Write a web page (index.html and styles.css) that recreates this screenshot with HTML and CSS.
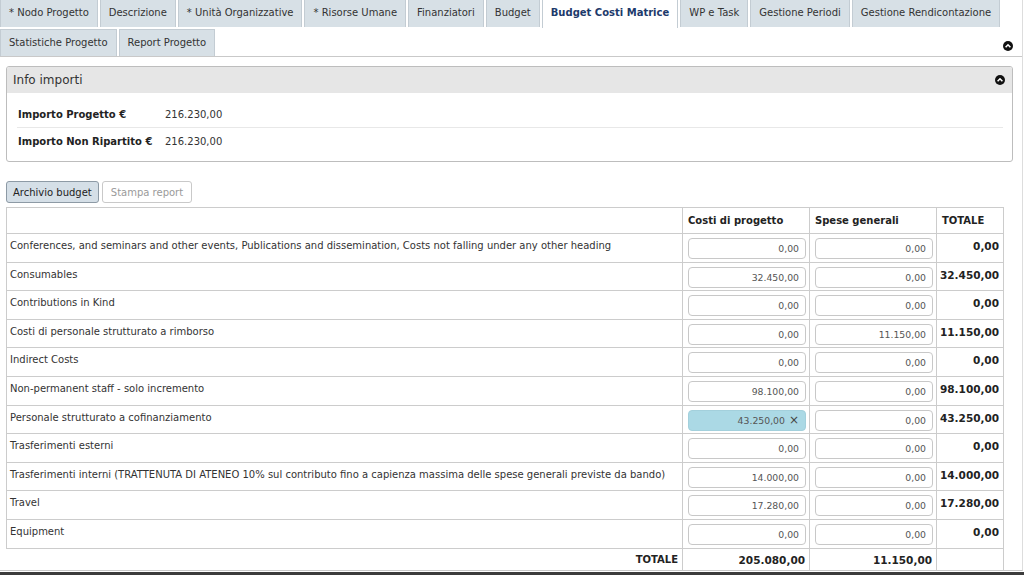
FILE: index.html
```html
<!DOCTYPE html>
<html lang="it">
<head>
<meta charset="utf-8">
<title>Budget Costi Matrice</title>
<link rel="stylesheet" href="styles.css">
</head>
<body>
<div class="page">
  <div class="tabs">
    <div class="tab-row">
      <span class="tab">* Nodo Progetto</span>
      <span class="tab">Descrizione</span>
      <span class="tab">* Unità Organizzative</span>
      <span class="tab">* Risorse Umane</span>
      <span class="tab">Finanziatori</span>
      <span class="tab">Budget</span>
      <span class="tab active">Budget Costi Matrice</span>
      <span class="tab">WP e Task</span>
      <span class="tab">Gestione Periodi</span>
      <span class="tab">Gestione Rendicontazione</span>
    </div>
    <div class="tab-row second">
      <span class="tab">Statistiche Progetto</span>
      <span class="tab">Report Progetto</span>
      <span class="spacer"></span>
      <svg class="toggle tabs-toggle" viewBox="0 0 10 10" width="10" height="10"><circle cx="5" cy="5" r="5" fill="#111"/><path d="M2.6 6.2 L5 3.8 L7.4 6.2" fill="none" stroke="#fff" stroke-width="1.6"/></svg>
    </div>
  </div>

  <div class="content">
    <section class="panel">
      <header class="panel-head">
        <span>Info importi</span>
        <svg class="toggle" viewBox="0 0 10 10" width="10" height="10"><circle cx="5" cy="5" r="5" fill="#111"/><path d="M2.6 6.2 L5 3.8 L7.4 6.2" fill="none" stroke="#fff" stroke-width="1.6"/></svg>
      </header>
      <div class="panel-body">
        <div class="info-row"><span class="info-label">Importo Progetto €</span><span>216.230,00</span></div>
        <div class="info-row"><span class="info-label">Importo Non Ripartito €</span><span>216.230,00</span></div>
      </div>
    </section>

    <div class="actions">
      <button class="btn primary">Archivio budget</button>
      <button class="btn disabled">Stampa report</button>
    </div>

    <table class="matrix">
      <thead>
        <tr><th class="c-label"></th><th class="c-num">Costi di progetto</th><th class="c-num">Spese generali</th><th class="c-tot">TOTALE</th></tr>
      </thead>
      <tbody>
        <tr><td>Conferences, and seminars and other events, Publications and dissemination, Costs not falling under any other heading</td><td><div class="inp">0,00</div></td><td><div class="inp">0,00</div></td><td class="tot">0,00</td></tr>
        <tr><td>Consumables</td><td><div class="inp">32.450,00</div></td><td><div class="inp">0,00</div></td><td class="tot">32.450,00</td></tr>
        <tr><td>Contributions in Kind</td><td><div class="inp">0,00</div></td><td><div class="inp">0,00</div></td><td class="tot">0,00</td></tr>
        <tr><td>Costi di personale strutturato a rimborso</td><td><div class="inp">0,00</div></td><td><div class="inp">11.150,00</div></td><td class="tot">11.150,00</td></tr>
        <tr><td>Indirect Costs</td><td><div class="inp">0,00</div></td><td><div class="inp">0,00</div></td><td class="tot">0,00</td></tr>
        <tr><td>Non-permanent staff - solo incremento</td><td><div class="inp">98.100,00</div></td><td><div class="inp">0,00</div></td><td class="tot">98.100,00</td></tr>
        <tr><td>Personale strutturato a cofinanziamento</td><td><div class="inp focus">43.250,00<span class="clear">×</span></div></td><td><div class="inp">0,00</div></td><td class="tot">43.250,00</td></tr>
        <tr><td>Trasferimenti esterni</td><td><div class="inp">0,00</div></td><td><div class="inp">0,00</div></td><td class="tot">0,00</td></tr>
        <tr><td>Trasferimenti interni (TRATTENUTA DI ATENEO 10% sul contributo fino a capienza massima delle spese generali previste da bando)</td><td><div class="inp">14.000,00</div></td><td><div class="inp">0,00</div></td><td class="tot">14.000,00</td></tr>
        <tr><td>Travel</td><td><div class="inp">17.280,00</div></td><td><div class="inp">0,00</div></td><td class="tot">17.280,00</td></tr>
        <tr><td>Equipment</td><td><div class="inp">0,00</div></td><td><div class="inp">0,00</div></td><td class="tot">0,00</td></tr>
      </tbody>
      <tfoot>
        <tr><td class="foot-label">TOTALE</td><td class="foot-num">205.080,00</td><td class="foot-num">11.150,00</td><td class="foot-empty"></td></tr>
      </tfoot>
    </table>
  </div>
</div>
<div class="taskbar"></div>
</body>
</html>
```

FILE: styles.css
```css
html, body {
  margin: 0;
  padding: 0;
  background: #fff;
}
body {
  font-family: "DejaVu Sans", Verdana, sans-serif;
  font-size: 10px;
  color: #333;
  height: 575px;
  display: flex;
  flex-direction: column;
  overflow: hidden;
}
.page {
  width: 1022px;
  height: 570px;
  border-right: 1px solid #ddd;
  border-bottom: 1px solid #c8c8c8;
  overflow: hidden;
}
.taskbar {
  flex: 1;
  background: #3c3c3c;
  margin-top: 1px;
}

/* tabs */
.tabs {
  border-bottom: 1px solid #c9c9c9;
}
.tab-row {
  display: flex;
  gap: 2px;
  height: 27px;
  align-items: flex-end;
}
.tab-row.second {
  margin-top: 2px;
  align-items: flex-start;
}
.tab {
  height: 27px;
  line-height: 26px;
  padding: 0 8px;
  background: #d7e0e6;
  border: 1px solid #c3ccd3;
  border-bottom: none;
  box-sizing: border-box;
  color: #333;
  white-space: nowrap;
}
.tab-row:first-child .tab {
  border-top: none;
}
.tab.active {
  background: #fff;
  color: #1d3a6b;
  font-weight: bold;
  height: 28px;
  margin-bottom: -1px;
  position: relative;
}
.spacer { flex: 1; }
.toggle { display: block; }
.tabs-toggle {
  align-self: center;
  margin: 6px 9px 0 0;
}

/* content */
.content {
  padding: 9px 9px 0 6px;
}
.panel {
  border: 1px solid #bdbdbd;
  border-radius: 3px;
  overflow: hidden;
}
.panel-head {
  height: 26px;
  background: #e6e6e6;
  display: flex;
  align-items: center;
  justify-content: space-between;
  padding: 0 7px 0 6px;
  font-size: 12px;
  color: #333;
}
.panel-body {
  padding: 8px 9px 7px 10px;
}
.info-row {
  display: flex;
  height: 26px;
  align-items: center;
}
.info-row + .info-row {
  border-top: 1px solid #e8e8e8;
}
.info-label {
  width: 147px;
  font-weight: bold;
  color: #222;
  padding-left: 1px;
}

.actions {
  display: flex;
  gap: 3px;
  margin-top: 19px;
  margin-bottom: 4px;
}
.btn {
  font-family: inherit;
  font-size: 10px;
  height: 22px;
  padding: 0 6px;
  border-radius: 3px;
  cursor: pointer;
}
.btn.primary {
  background: #d5dfe7;
  border: 1px solid #8d9aa5;
  color: #222;
}
.btn.disabled {
  background: #fff;
  border: 1px solid #c9c9c9;
  color: #9a9a9a;
  padding: 0 8px;
}

/* table */
.matrix {
  width: 998px;
  border-collapse: collapse;
  table-layout: fixed;
}
.matrix th, .matrix td {
  border: 1px solid #cccccc;
  vertical-align: top;
  text-align: left;
}
.matrix th {
  height: 25px;
  padding: 0 5px;
  vertical-align: middle;
  font-weight: bold;
  color: #222;
}
.c-label { width: 665px; }
.c-num { width: 116px; }
.c-tot { width: 56px; }
.matrix tbody td {
  height: 28.6px;
  padding: 4px 3px 0 3px;
  box-sizing: border-box;
  white-space: nowrap;
}
.matrix tbody td:first-child {
  padding: 6px 3px 0 3px;
}
.matrix tbody td.tot {
  text-align: right;
  font-weight: bold;
  font-size: 10.5px;
  color: #222;
  padding: 6px 4px 0 3px;
}
.inp {
  margin-left: 2px;
  height: 21px;
  box-sizing: border-box;
  border: 1px solid #c8c8c8;
  border-radius: 4px;
  text-align: right;
  font-size: 9.3px;
  line-height: 19px;
  padding-right: 6px;
  color: #555;
  background: #fff;
}
.inp.focus {
  background: #abd9e5;
  border-color: #a3d0dc;
}
.clear {
  font-size: 12px;
  margin-left: 4px;
  color: #444;
}
.matrix tfoot td {
  height: 22px;
  padding: 0 4px;
  text-align: right;
  font-weight: bold;
  color: #222;
  vertical-align: middle;
}
.matrix tfoot td.foot-num { font-size: 10.5px; }
.matrix tfoot td.foot-label {
  border-left: none;
  border-bottom: none;
}
.matrix tfoot td.foot-empty,
.matrix tfoot td.foot-num {
  border-bottom: none;
}
```
